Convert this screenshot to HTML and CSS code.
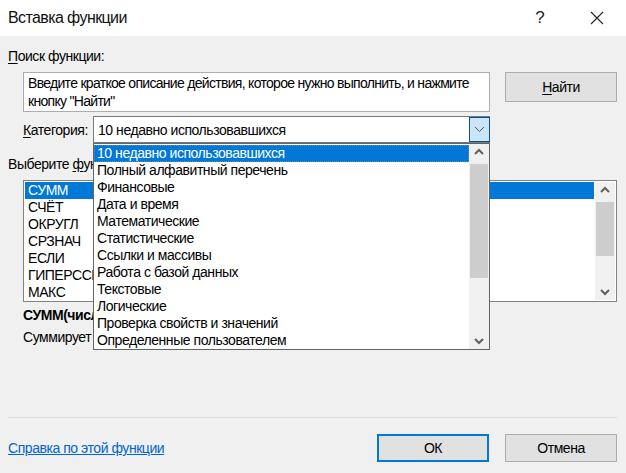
FILE: index.html
```html
<!DOCTYPE html>
<html lang="ru">
<head>
<meta charset="utf-8">
<title>Вставка функции</title>
<link rel="stylesheet" href="styles.css">
</head>
<body>
<div class="dialog">
  <div class="titlebar">
    <span class="title">Вставка функции</span>
    <span class="help">?</span>
    <svg class="close" width="14" height="14" viewBox="0 0 14 14"><path d="M1 1 L13 13 M13 1 L1 13" stroke="#222" stroke-width="1.1" fill="none"/></svg>
  </div>
  <div class="content">
    <div class="label"><u>П</u>оиск функции:</div>
    <div class="search-row">
      <div class="search-box">Введите краткое описание действия, которое нужно выполнить, и нажмите кнопку "Найти"</div>
      <div class="btn find"><u>Н</u>айти</div>
    </div>
    <div class="cat-row">
      <div class="cat-label"><u>К</u>атегория:</div>
      <div class="select">
        <span class="select-text">10 недавно использовавшихся</span>
        <div class="select-btn">
          <svg width="11" height="7" viewBox="0 0 11 7"><path d="M1 1 L5.5 5.5 L10 1" stroke="#3c5a78" stroke-width="1" fill="none"/></svg>
        </div>
        <div class="dropdown">
          <ul class="dd-items">
            <li class="sel">10 недавно использовавшихся</li>
            <li>Полный алфавитный перечень</li>
            <li>Финансовые</li>
            <li>Дата и время</li>
            <li>Математические</li>
            <li>Статистические</li>
            <li>Ссылки и массивы</li>
            <li>Работа с базой данных</li>
            <li>Текстовые</li>
            <li>Логические</li>
            <li>Проверка свойств и значений</li>
            <li>Определенные пользователем</li>
          </ul>
          <div class="scrollbar dd-scroll">
            <svg class="arr" width="20" height="16" viewBox="0 0 20 16"><path d="M6 10 L10 6 L14 10" stroke="#606060" stroke-width="2" fill="none"/></svg>
            <div class="track"><div class="thumb dd-thumb"></div></div>
            <svg class="arr" width="20" height="16" viewBox="0 0 20 16"><path d="M6 6 L10 10 L14 6" stroke="#606060" stroke-width="2" fill="none"/></svg>
          </div>
        </div>
      </div>
    </div>
    <div class="label choose">Выберите <u>ф</u>ункцию:</div>
    <div class="fn-list">
      <ul class="fn-items">
        <li class="sel">СУММ</li>
        <li>СЧЁТ</li>
        <li>ОКРУГЛ</li>
        <li>СРЗНАЧ</li>
        <li>ЕСЛИ</li>
        <li>ГИПЕРССЫЛКА</li>
        <li>МАКС</li>
      </ul>
      <div class="scrollbar fn-scroll">
        <svg class="arr" width="20" height="16" viewBox="0 0 20 16"><path d="M6 10 L10 6 L14 10" stroke="#606060" stroke-width="2" fill="none"/></svg>
        <div class="track"><div class="thumb fn-thumb"></div></div>
        <svg class="arr" width="20" height="16" viewBox="0 0 20 16"><path d="M6 6 L10 10 L14 6" stroke="#606060" stroke-width="2" fill="none"/></svg>
      </div>
    </div>
    <div class="signature">СУММ(число1;число2;...)</div>
    <div class="desc">Суммирует аргументы.</div>
    <div class="separator"></div>
    <div class="bottom-row">
      <a class="help-link" href="#">Справка по этой функции</a>
      <div class="buttons">
        <div class="btn ok">ОК</div>
        <div class="btn">Отмена</div>
      </div>
    </div>
  </div>
</div>
</body>
</html>
```
FILE: styles.css
```css
* { box-sizing: border-box; }
html, body { margin: 0; padding: 0; }
body {
  width: 626px;
  height: 473px;
  overflow: hidden;
  font-family: "Liberation Sans", Arial, sans-serif;
  font-size: 14px;
  letter-spacing: -0.45px;
  color: #000;
  background: #f0f0f0;
}
.dialog { width: 626px; height: 473px; display: flex; flex-direction: column; }
u { text-decoration: underline; text-underline-offset: 2px; }

.titlebar {
  height: 36px;
  background: #fff;
  display: flex;
  align-items: center;
  padding-left: 8px;
  font-size: 16px;
  letter-spacing: -0.6px;
  flex-shrink: 0;
}
.title { flex: 1; color: #111; }
.help { font-size: 17px; color: #222; margin-right: 46px; font-weight: 300; }
.close { margin-right: 22px; }

.content { padding: 11px 9px 0 8px; flex: 1; display: flex; flex-direction: column; }
.label { height: 18px; line-height: 18px; }

.search-row { display: flex; margin-top: 7px; }
.search-box {
  margin-left: 15px;
  width: 467px;
  height: 40px;
  background: #fff;
  border: 1px solid #adadad;
  padding: 1px 4px;
  line-height: 18px;
  letter-spacing: -0.7px;
}
.btn {
  width: 112px;
  height: 28px;
  background: #e1e1e1;
  border: 1px solid #adadad;
  display: flex;
  align-items: center;
  justify-content: center;
}
.find { margin-left: 15px; height: 30px; }

.cat-row { display: flex; align-items: center; margin-top: 4px; margin-left: 15px; height: 27px; }
.cat-label { width: 70px; }
.select {
  position: relative;
  width: 397px;
  height: 27px;
  background: #fff;
  border: 1px solid #7a7a7a;
  display: flex;
  align-items: center;
  padding-left: 4px;
}
.select-text { flex: 1; }
.select-btn {
  width: 21px;
  height: 25px;
  background: #cce4f7;
  border: 1px solid #005499;
  display: flex;
  align-items: center;
  justify-content: center;
  margin-right: -1px;
}
.dropdown {
  position: absolute;
  left: -1px;
  top: 26px;
  width: 397px;
  height: 207px;
  background: #fff;
  border: 1px solid #646464;
  display: flex;
  z-index: 10;
}
ul { list-style: none; margin: 0; padding: 0; }
.dd-items { flex: 1; padding-top: 1px; }
.dd-items li { height: 17px; line-height: 17px; padding-left: 3px; white-space: nowrap; }
.dd-items li.sel { background: #0078d7; color: #fff; outline: 1px dotted #6a8ab0; outline-offset: -1px; }

.scrollbar { width: 20px; background: #f0f0f0; display: flex; flex-direction: column; }
.scrollbar .arr { display: block; flex-shrink: 0; }
.track { flex: 1; position: relative; }
.thumb { position: absolute; left: 1px; right: 1px; background: #cdcdcd; }
.dd-thumb { top: 4px; height: 114px; }
.fn-thumb { top: 4px; height: 54px; }

.choose { margin-top: 12px; }
.fn-list {
  margin-top: 7px;
  margin-left: 15px;
  width: 594px;
  height: 122px;
  background: #fff;
  border: 1px solid #828282;
  display: flex;
}
.fn-items { flex: 1; padding: 1px 1px 0 1px; }
.fn-items li { height: 17px; line-height: 17px; padding-left: 3px; }
.fn-items li.sel { background: #0078d7; color: #fff; }
.fn-scroll { margin: 1px 1px 1px 0; }

.signature { margin-top: 4px; margin-left: 15px; font-weight: bold; height: 18px; line-height: 18px; }
.desc { margin-top: 4px; margin-left: 15px; height: 18px; line-height: 18px; }

.separator { margin-top: 71px; height: 1px; background: #dcdcdc; width: 609px; }
.bottom-row { display: flex; align-items: center; justify-content: space-between; margin-top: 16px; }
.help-link { color: #0066cc; text-decoration: underline; }
.buttons { display: flex; gap: 16px; }
.ok { border: 2px solid #0078d7; }
```
